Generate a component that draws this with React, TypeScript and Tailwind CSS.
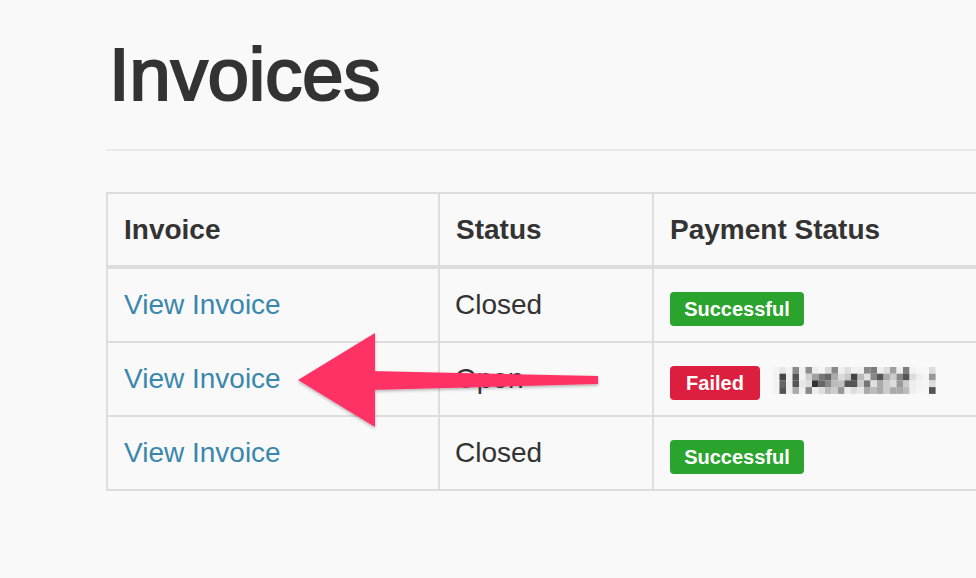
import React from "react";

const blur: string[][] = [
  ["#f4f4f4","#e6e6e6","#f2f2f2","#8a8a8a","#f0f0f0","#8c8c8c","#eeeeee","#f5f5f5","#d8d8d8","#8a8a8a","#f0f0f0","#dedede","#f2f2f2","#f0f0f0","#8a8a8a","#7c7c7c","#eeeeee","#dddddd","#a0a0a0","#eeeeee","#7e7e7e","#f2f2f2","#f7f7f7","#f7f7f7","#dddddd"],
  ["#f2f2f2","#444444","#eeeeee","#555555","#f0f0f0","#d0d0d0","#a0a0a0","#777777","#666666","#aaaaaa","#dadada","#c8c8c8","#444444","#bbbbbb","#e0e0e0","#888888","#555555","#aaaaaa","#cccccc","#888888","#555555","#dddddd","#eeeeee","#f5f5f5","#999999"],
  ["#f2f2f2","#666666","#eeeeee","#555555","#e8e8e8","#dddddd","#333333","#666666","#888888","#bbbbbb","#c0c0c0","#555555","#555555","#cccccc","#777777","#e0e0e0","#aaaaaa","#cccccc","#dddddd","#999999","#cccccc","#eeeeee","#f2f2f2","#f5f5f5","#dddddd"],
  ["#f2f2f2","#555555","#f0f0f0","#aaaaaa","#f0f0f0","#888888","#eeeeee","#dddddd","#bbbbbb","#cccccc","#999999","#eeeeee","#dddddd","#e8e8e8","#aaaaaa","#bbbbbb","#aaaaaa","#cccccc","#aaaaaa","#aaaaaa","#bbbbbb","#eeeeee","#f5f5f5","#f7f7f7","#555555"],
];

function Blurred() {
  return (
    <svg width="163" height="27" viewBox="0 0 163 27" className="ml-[13px] mt-[2px]">
      {blur.map((row, r) =>
        row.map((c, i) => (
          <rect key={`${r}-${i}`} x={i * 6.5} y={r * 6.7} width={6.6} height={6.8} fill={c} />
        ))
      )}
    </svg>
  );
}

function Badge({ kind }: { kind: "ok" | "fail" }) {
  return kind === "ok" ? (
    <span className="mt-2 flex h-[34px] w-[134px] items-center justify-center rounded-[4px] bg-[#2aa42c] text-[20px] font-bold text-white">
      Successful
    </span>
  ) : (
    <span className="mt-2 flex h-[34px] w-[90px] items-center justify-center rounded-[4px] bg-[#dc1f3e] text-[20px] font-bold text-white">
      Failed
    </span>
  );
}

function Row({ status, pay, last }: { status: string; pay: "ok" | "fail"; last?: boolean }) {
  return (
    <div className={`flex ${last ? "h-[72px]" : "h-[74px] border-b-2 border-[#dddddd]"}`}>
      <div className="flex w-[332px] items-center border-r-2 border-[#dddddd] pl-[16px]">
        <span className="text-[#3a87ad]">View Invoice</span>
      </div>
      <div className="flex w-[214px] items-center border-r-2 border-[#dddddd] pl-[15px]">
        <span>{status}</span>
      </div>
      <div className="flex flex-1 items-center pl-[16px]">
        <Badge kind={pay} />
        {pay === "fail" && <Blurred />}
      </div>
    </div>
  );
}

export default function App() {
  return (
    <div
      className="relative h-[578px] w-[976px] overflow-hidden bg-[#f8f9f8] text-[#333333]"
      style={{ fontFamily: '"Liberation Sans", Arial, Helvetica, sans-serif' }}
    >
      <div className="pl-[106px] pt-[38px]">
        <h1 className="ml-[3px] text-[74px] leading-none font-normal text-[#333333] [-webkit-text-stroke:2.2px_#333333]">
          Invoices
        </h1>
        <div className="mt-[37px] h-[2px] w-[900px] bg-[#e9ecea]" />
        <div className="mt-[41px] w-[1000px] border-2 border-[#dddddd] text-[28px]">
          <div className="flex h-[75px] border-b-4 border-[#dddddd] font-bold">
            <div className="flex w-[332px] items-center border-r-2 border-[#dddddd] pl-[16px]">Invoice</div>
            <div className="flex w-[214px] items-center border-r-2 border-[#dddddd] pl-[16px]">Status</div>
            <div className="flex flex-1 items-center pl-[16px]">Payment Status</div>
          </div>
          <Row status="Closed" pay="ok" />
          <Row status="Open" pay="fail" />
          <Row status="Closed" pay="ok" last />
        </div>
      </div>
      <svg
        className="pointer-events-none absolute left-0 top-0"
        width="976"
        height="578"
        viewBox="0 0 976 578"
      >
        <defs>
          <filter id="sh" x="-10%" y="-20%" width="120%" height="140%">
            <feDropShadow dx="0" dy="1.5" stdDeviation="1.5" floodColor="#000" floodOpacity="0.3" />
          </filter>
        </defs>
        <g filter="url(#sh)" fill="#ff3366">
          <polygon points="370,371 598,376 598,384 370,390" />
          <polygon points="298,380 375,333 375,427" />
        </g>
      </svg>
    </div>
  );
}
